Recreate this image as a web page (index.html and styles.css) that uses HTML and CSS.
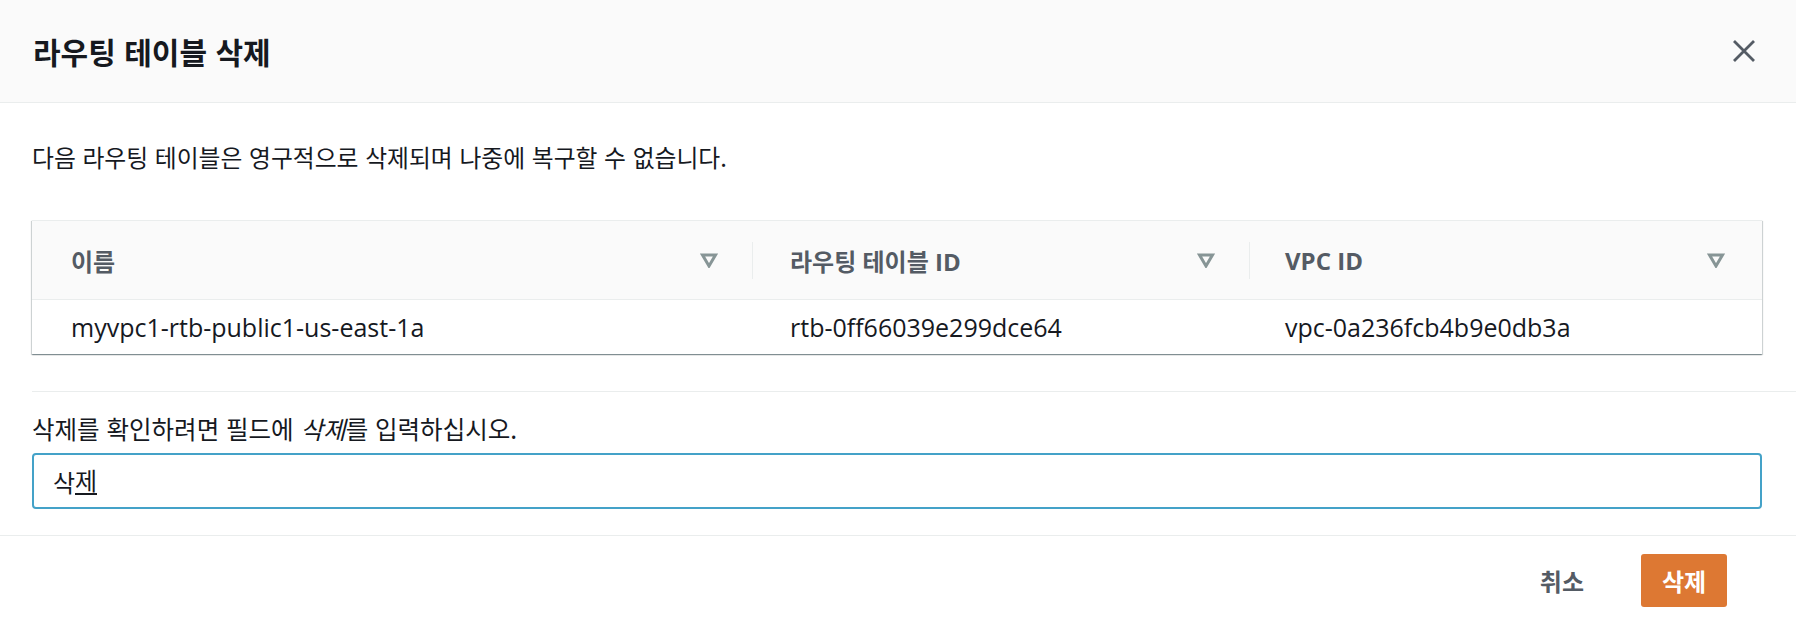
FILE: index.html
```html
<!DOCTYPE html>
<html lang="ko">
<head>
<meta charset="utf-8">
<title>라우팅 테이블 삭제</title>
<link rel="stylesheet" href="styles.css">
</head>
<body>
<div class="modal">
  <div class="modal-header">
    <h2 class="modal-title">라우팅 테이블 삭제</h2>
    <button class="close-btn" aria-label="닫기">
      <svg width="24" height="24" viewBox="0 0 24 24"><path d="M2 2 L22 22 M22 2 L2 22" stroke="#545b64" stroke-width="2.8" fill="none"/></svg>
    </button>
  </div>
  <div class="modal-body">
    <p class="desc">다음 라우팅 테이블은 영구적으로 삭제되며 나중에 복구할 수 없습니다.</p>
    <div class="table">
      <div class="thead">
        <div class="th"><span>이름</span><svg class="sort" width="18" height="15" viewBox="0 0 18 15"><polygon points="2.5,2 15.5,2 9,13" fill="none" stroke="#879596" stroke-width="3" stroke-linejoin="miter"/></svg></div>
        <div class="th sep"><span>라우팅 테이블 ID</span><svg class="sort" width="18" height="15" viewBox="0 0 18 15"><polygon points="2.5,2 15.5,2 9,13" fill="none" stroke="#879596" stroke-width="3" stroke-linejoin="miter"/></svg></div>
        <div class="th sep"><span>VPC ID</span><svg class="sort" width="18" height="15" viewBox="0 0 18 15"><polygon points="2.5,2 15.5,2 9,13" fill="none" stroke="#879596" stroke-width="3" stroke-linejoin="miter"/></svg></div>
      </div>
      <div class="trow">
        <div class="td c1">myvpc1-rtb-public1-us-east-1a</div>
        <div class="td c2">rtb-0ff66039e299dce64</div>
        <div class="td c3">vpc-0a236fcb4b9e0db3a</div>
      </div>
    </div>
  </div>
  <div class="confirm">
    <div class="label">삭제를 확인하려면 필드에 <em>삭제</em>를 입력하십시오.</div>
    <div class="input">삭<span class="composing">제</span></div>
  </div>
  <div class="modal-footer">
    <button class="btn-cancel">취소</button>
    <button class="btn-primary">삭제</button>
  </div>
</div>
</body>
</html>
```
FILE: styles.css
```css
* { box-sizing: border-box; }
html, body {
  margin: 0;
  padding: 0;
  background: #ffffff;
}
body {
  font-family: "Open Sans", "Noto Sans CJK KR", sans-serif;
  color: #16191f;
  font-size: 24px;
}
.modal { width: 1796px; height: 624px; }

.modal-header {
  height: 103px;
  background: #fafafa;
  border-bottom: 1px solid #eaeded;
  display: flex;
  align-items: center;
  justify-content: space-between;
  padding: 0 40px 0 33px;
}
.modal-title {
  margin: 0;
  font-family: "Noto Sans CJK KR", sans-serif;
  font-weight: 700;
  font-size: 30px;
  line-height: 38px;
  color: #16191f;
}
.close-btn {
  background: none;
  border: 0;
  padding: 0;
  width: 24px;
  height: 24px;
  display: flex;
}

.modal-body { padding: 38px 34px 0 32px; }
.desc {
  margin: 0;
  font-family: "Noto Sans CJK KR", sans-serif;
  font-size: 23.8px;
  line-height: 32px;
}
.table {
  margin-top: 47px;
  border-top: 1px solid #eaeded;
  box-shadow: 0 1px 1px 0 rgba(0, 28, 36, 0.3), 1px 1px 1px 0 rgba(0, 28, 36, 0.15), -1px 1px 1px 0 rgba(0, 28, 36, 0.15);
}
.thead, .trow {
  display: grid;
  grid-template-columns: 720px 497px 1fr;
}
.thead {
  height: 78px;
  background: #fafafa;
  align-items: center;
}
.th {
  height: 37px;
  display: flex;
  align-items: center;
  justify-content: space-between;
  padding: 0 34px 0 39px;
  font-family: "Open Sans", "Noto Sans CJK KR", sans-serif;
  font-weight: 700;
  color: #545b64;
  font-size: 24px;
}
.th.sep { border-left: 1px solid #eaeded; padding-left: 37px; }
.th:last-child { padding-right: 37px; padding-left: 35px; }
.trow {
  height: 55px;
  border-top: 1px solid #eaeded;
  align-items: center;
}
.td { padding-left: 39px; font-size: 25px; }
.td.c2 { padding-left: 38px; }
.td.c3 { padding-left: 36px; }

.confirm {
  margin: 37px 0 0 32px;
  border-top: 1px solid #eaeded;
  padding: 21px 34px 26px 0;
}
.label {
  font-family: "Noto Sans CJK KR", sans-serif;
  font-size: 24.5px;
  line-height: 32px;
}
.label em { font-style: italic; }
.input {
  margin-top: 8px;
  height: 56px;
  border: 2px solid #44a2c8;
  border-radius: 4px;
  padding: 0 19px;
  display: flex;
  align-items: center;
  font-family: "Noto Sans CJK KR", sans-serif;
  font-size: 24px;
}
.composing { border-bottom: 2px solid #16191f; line-height: 26px; }

.modal-footer {
  border-top: 1px solid #eaeded;
  display: flex;
  justify-content: flex-end;
  align-items: center;
  padding: 18px 69px 0 0;
}
.btn-cancel {
  background: none;
  border: 0;
  font-family: "Noto Sans CJK KR", sans-serif;
  font-weight: 700;
  font-size: 24px;
  color: #545b64;
  padding: 0 20px;
  margin-right: 37px;
  height: 53px;
}
.btn-primary {
  background: #dd7833;
  border: 0;
  border-radius: 3px;
  width: 86px;
  height: 53px;
  color: #ffffff;
  font-family: "Noto Sans CJK KR", sans-serif;
  font-weight: 700;
  font-size: 24px;
}
```
